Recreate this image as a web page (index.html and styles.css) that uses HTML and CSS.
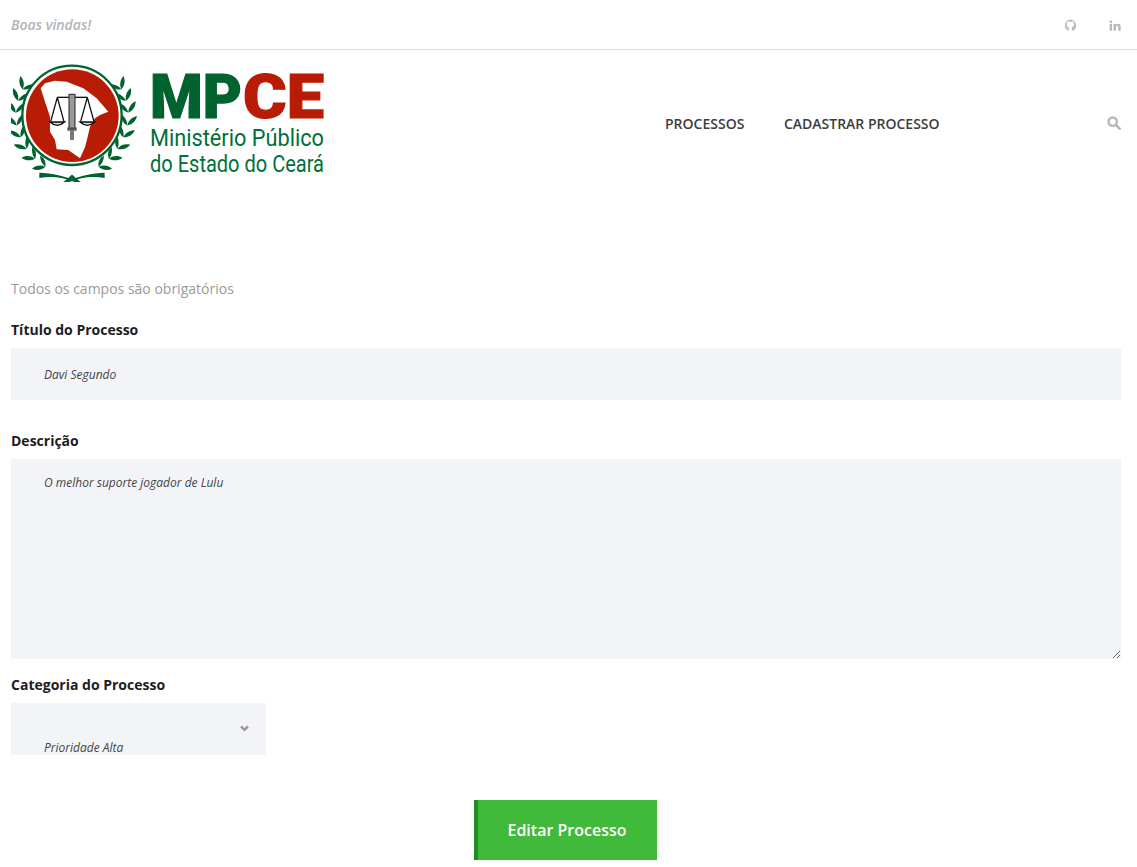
FILE: index.html
```html
<!DOCTYPE html>
<html lang="pt-BR">
<head>
<meta charset="utf-8">
<title>MPCE</title>
<link rel="stylesheet" href="styles.css">
</head>
<body>
<div class="topbar">
  <em class="welcome">Boas vindas!</em>
  <div class="social">
    <svg class="icon" viewBox="0 0 16 16" aria-label="GitHub"><path d="M8 1a7 7 0 0 0-2.300 13.600c.4 0 .5-.2.5-.4v-2.200C4 12.400 3.500 11.200 3.500 11.200c-.3-.8-.8-1-.8-1-.6-.4 0-.4 0-.4.7 0 1.100.7 1.100.7.600 1.100 1.700.8 2.200.6 0-.5.2-.8.4-1-1.600-.2-3.200-.8-3.200-3.500 0-.8.3-1.400.7-1.900 0-.2-.3-.9.100-1.900 0 0 .6-.2 2 .7a7 7 0 0 1 3.600 0c1.400-.9 2-.7 2-.7.4 1 .1 1.700.1 1.900.4.500.7 1.100.7 1.900 0 2.700-1.700 3.300-3.200 3.500.3.200.5.700.5 1.300v2.800c0 .2.100.4.500.4A7 7 0 0 0 8 1z"/></svg>
    <svg class="icon" viewBox="0 0 16 16" aria-label="LinkedIn"><path d="M2 6h3v8.500H2zM3.500 1.700a1.700 1.700 0 1 1 0 3.400 1.700 1.700 0 0 1 0-3.400zM6.800 6h2.900v1.200c.5-.8 1.400-1.400 2.700-1.400 2.500 0 3.200 1.600 3.200 3.900v4.800h-3v-4.300c0-1.100-.2-2-1.300-2-1.200 0-1.500.9-1.500 2v4.300h-3z"/></svg>
  </div>
</div>

<header class="header">
  <svg class="logo" viewBox="11 62 315 122" role="img" aria-label="MPCE">
    <defs>
      <g id="pair">
        <path d="M0 0C-14-6-22-18-22-34-9-28 0-16 0 0z"/>
        <path d="M0 0C3-12 11-22 24-28 23-14 14-3 0 0z"/>
      </g>
      <g id="branch" fill="#00632f">
        <use href="#pair" transform="translate(68 88) rotate(24)"/>
        <use href="#pair" transform="translate(54 122) rotate(12)"/>
        <use href="#pair" transform="translate(47 158) rotate(0)"/>
        <use href="#pair" transform="translate(50 196) rotate(-13)"/>
        <use href="#pair" transform="translate(62 232) rotate(-26)"/>
        <use href="#pair" transform="translate(80 266) rotate(-40)"/>
        <use href="#pair" transform="translate(105 296) rotate(-53)"/>
        <use href="#pair" transform="translate(136 320) rotate(-66)"/>
        <path d="M118 338C155 340 195 346 236 366L224 366C190 352 155 348 118 354z"/>
        <path d="M190 366L216 344 222 350 204 366z"/>
      </g>
    </defs>
    <g transform="translate(0 60) scale(.3333)">
      <use href="#branch"/>
      <use href="#branch" transform="translate(432 0) scale(-1 1)"/>
      <circle cx="216" cy="166" r="149" fill="none" stroke="#00632f" stroke-width="7"/>
      <circle cx="217" cy="167" r="139" fill="#b91c05"/>
      <path fill="#fff" d="M122 85L135 70 165 62 200 65 250 85 290 115 325 155 300 165 285 175 270 200 262 235 255 262 240 295 205 270 170 268 165 240 150 215 150 170 135 125z"/>
      <g fill="none" stroke="#111" stroke-width="4">
        <path d="M172 112H262"/>
        <path d="M172 112L152 185M172 112L192 185M262 112L242 185M262 112L282 185"/>
        <path d="M150 186Q171 206 194 186zM240 186Q262 206 284 186z" fill="#ccc"/>
      </g>
      <rect x="207" y="103" width="18" height="105" fill="#999" stroke="#222" stroke-width="3"/>
      <rect x="202" y="202" width="28" height="10" fill="#555"/>
      <rect x="210" y="211" width="12" height="29" fill="#777"/>
    </g>
    <text class="mark mark-green" x="150" y="118" textLength="92" lengthAdjust="spacingAndGlyphs">MP</text>
    <text class="mark mark-red" x="243" y="118" textLength="81" lengthAdjust="spacingAndGlyphs">CE</text>
    <text class="sub" x="150" y="146" textLength="174" lengthAdjust="spacingAndGlyphs">Ministério Público</text>
    <text class="sub" x="150" y="172" textLength="174" lengthAdjust="spacingAndGlyphs">do Estado do Ceará</text>
  </svg>
  <nav class="nav">
    <a href="#">PROCESSOS</a>
    <a href="#">CADASTRAR PROCESSO</a>
  </nav>
  <svg class="search" viewBox="0 0 16 16" aria-label="Buscar"><circle cx="6.500" cy="6.500" r="4.800" fill="none" stroke-width="2.800"/><path d="M10 10l4.500 4.500" stroke-width="3" stroke-linecap="round"/></svg>
</header>

<main class="main">
  <p class="hint">Todos os campos são obrigatórios</p>
  <form class="form">
    <label class="label" for="titulo">Título do Processo</label>
    <input class="field field-input" id="titulo" type="text" placeholder="Davi Segundo">
    <label class="label label-desc" for="descricao">Descrição</label>
    <textarea class="field field-area" id="descricao" placeholder="O melhor suporte jogador de Lulu"></textarea>
    <label class="label label-cat" for="categoria">Categoria do Processo</label>
    <div class="select-wrap">
      <select class="field field-select" id="categoria">
        <option>Prioridade Alta</option>
      </select>
      <svg class="chevron" viewBox="0 0 10 8"><path d="M1 1.500l4 4 4-4" fill="none" stroke-width="2.800"/></svg>
    </div>
    <div class="actions"><button class="submit" type="button">Editar Processo</button></div>
  </form>
</main>
</body>
</html>
```
FILE: styles.css
```css
* { box-sizing: border-box; }
html, body { margin: 0; background: #fff; }
body { font-family: "Open Sans", sans-serif; color: #222; height: 867px; overflow: hidden; }

.topbar {
  height: 50px;
  padding: 0 16px 0 11px;
  border-bottom: 1px solid #dcdce4;
  display: flex;
  align-items: center;
  justify-content: space-between;
}
.welcome { font-size: 14px; font-weight: 600; color: #b2b4b8; }
.social { display: flex; gap: 31px; margin-top: 1px; }
.icon { width: 13px; height: 13px; fill: #b7babd; display: block; }

.header {
  height: 140px;
  padding: 12px 16px 0 11px;
  display: flex;
  align-items: flex-start;
}
.logo { width: 315px; height: 122px; display: block; flex: none; }
.mark { font-family: Roboto, sans-serif; font-weight: 900; font-size: 62px; stroke-width: 1.2px; }
.mark-green { fill: #00632f; stroke: #00632f; }
.mark-red { fill: #b91c05; stroke: #b91c05; }
.sub { font-family: Roboto, sans-serif; font-size: 24px; fill: #00703a; }

.nav {
  margin-left: 339px;
  display: flex;
  gap: 39.5px;
  height: 122px;
  align-items: center;
}
.nav a { font-size: 14px; font-weight: 600; color: #3d3d3d; text-decoration: none; white-space: nowrap; }
.search {
  margin-left: auto;
  margin-top: 54px;
  width: 14px;
  height: 14px;
  fill: none;
  stroke: #b7babd;
  flex: none;
}

.main { padding: 89px 16px 0 11px; }
.hint { margin: 0; font-size: 14px; line-height: 20px; color: #999; }
.form { display: flex; flex-direction: column; }
.label { font-size: 14px; font-weight: 700; line-height: 20px; color: #1d1d1d; }
.label:first-child { margin-top: 21px; margin-bottom: 8px; }
.label-desc { margin-top: 31px; margin-bottom: 8px; }
.label-cat { margin-top: 16px; margin-bottom: 8px; }

.field {
  border: 0;
  border-radius: 0;
  background: #f3f4f8;
  font-family: "Open Sans", sans-serif;
  font-style: italic;
  font-size: 12px;
  color: #444;
  outline: none;
  display: block;
  width: 100%;
}
.field::placeholder { color: #444; opacity: 1; }
.field-input { height: 52px; padding: 0 33px; }
.field-area { height: 200px; padding: 15px 33px; }
.select-wrap { position: relative; width: 255px; height: 52px; }
.field-select {
  appearance: none;
  height: 52px;
  padding: 37px 33px 0;
  line-height: 16px;
}
.chevron {
  position: absolute;
  left: 229px;
  top: 22px;
  width: 9px;
  height: 7px;
  stroke: #999;
  pointer-events: none;
}
.actions { display: flex; justify-content: center; margin-top: 45px; padding-right: 2px; }
.submit {
  width: 183px;
  height: 60px;
  border: 0;
  border-left: 4px solid #1f8f1f;
  background: #41b93a;
  color: #fff;
  font-family: "Open Sans", sans-serif;
  font-size: 16px;
  font-weight: 600;
}
```
